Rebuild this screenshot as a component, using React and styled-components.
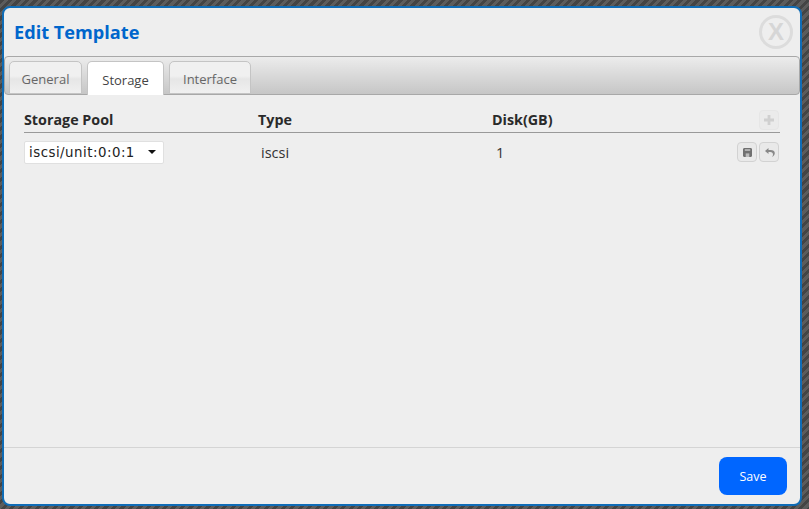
import React from "react";
import styled, { createGlobalStyle } from "styled-components";

const Global = createGlobalStyle`
  html, body { margin: 0; padding: 0; height: 100%; }
  body { font-family: "Open Sans", sans-serif; overflow: hidden; }
  #root { height: 100%; }
`;

const Page = styled.div`
  box-sizing: border-box;
  width: 809px;
  height: 509px;
  padding: 6px 7px 3px 2px;
  background: repeating-linear-gradient(135deg, #444444 0 3px, #5c5c5c 3px 6px);
`;

const Modal = styled.section`
  box-sizing: border-box;
  height: 500px;
  display: flex;
  flex-direction: column;
  background: #eeeeee;
  border: 2px solid #0f6cb6;
  border-radius: 8px;
`;

const Header = styled.header`
  height: 48px;
  flex: none;
  display: flex;
  align-items: center;
  justify-content: space-between;
  padding: 0 7px 0 10px;
`;

const Title = styled.h1`
  margin: 0;
  font-size: 18.15px;
  font-weight: 700;
  color: #0066cc;
`;

const Close = styled.div`
  box-sizing: border-box;
  width: 34px;
  height: 34px;
  border: 3px solid #dcdcdc;
  border-radius: 50%;
  display: flex;
  align-items: center;
  justify-content: center;
  font: 700 24px "Liberation Sans", sans-serif;
  color: #d6d6d6;
`;

const TabBar = styled.nav`
  box-sizing: border-box;
  height: 39px;
  flex: none;
  padding: 4px 4px 0;
  display: flex;
  align-items: flex-start;
  gap: 5px;
  border: 1px solid #a8a8a8;
  border-radius: 4px;
  background: linear-gradient(#ececec, #c6c6c6);
`;

const Tab = styled.div`
  box-sizing: border-box;
  height: ${(p) => (p.$active ? "34px" : "33px")};
  width: ${(p) => p.$w}px;
  display: flex;
  align-items: center;
  justify-content: center;
  padding-top: 2px;
  font-size: 13px;
  color: ${(p) => (p.$active ? "#444" : "#666")};
  border: 1px solid #c4c4c4;
  border-bottom: ${(p) => (p.$active ? "none" : "1px solid #c4c4c4")};
  border-radius: 5px 5px 0 0;
  background: ${(p) => (p.$active ? "#fff" : "linear-gradient(#f0f0f0 0 45%, #e6e6e6 55%, #f0f0f0)")};
`;

const Body = styled.div`
  flex: 1;
  padding: 15px 20px 0;
`;

const Row = styled.div`
  display: grid;
  grid-template-columns: 234px 234px 1fr auto;
  align-items: center;
`;

const HeadRow = styled(Row)`
  height: 22px;
  border-bottom: 1px solid #999;
  align-items: start;
`;

const HeadCell = styled.div`
  font-size: 14.3px;
  font-weight: 700;
  line-height: 20px;
  color: #2a2a2a;
`;

const DataRow = styled(Row)`
  margin-top: 7px;
  height: 24px;
`;

const Cell = styled.div`
  font-size: 14.5px;
  color: #333;
  padding-left: ${(p) => p.$pad}px;
`;

const FakeSelect = styled.div`
  box-sizing: border-box;
  width: 140px;
  height: 23px;
  padding: 0 7px 0 4px;
  display: flex;
  align-items: center;
  justify-content: space-between;
  background: #fff;
  border: 1px solid #e0e0e0;
  border-radius: 2px;
  font: 13.33px "DejaVu Sans", sans-serif;
  letter-spacing: 0.5px;
  color: #222;
`;

const Caret = styled.span`
  width: 0;
  height: 0;
  border-left: 4px solid transparent;
  border-right: 4px solid transparent;
  border-top: 4px solid #111;
`;

const Actions = styled.div`
  display: flex;
  gap: 2px;
  padding-right: 1px;
`;

const IconBtn = styled.div`
  box-sizing: border-box;
  width: 20px;
  height: 20px;
  display: flex;
  align-items: center;
  justify-content: center;
  border: 1px solid ${(p) => (p.$faint ? "#e6e6e6" : "#d2d2d2")};
  border-radius: 4px;
  background: ${(p) => (p.$faint ? "#ebebeb" : "#e9e9e9")};
`;

const Footer = styled.footer`
  height: 57px;
  flex: none;
  box-sizing: border-box;
  border-top: 1px solid #d4d4d4;
  display: flex;
  justify-content: flex-end;
  align-items: flex-start;
  padding: 9px 13px 0 0;
`;

const SaveButton = styled.button`
  width: 68px;
  height: 38px;
  border: none;
  border-radius: 8px;
  background: #0066ff;
  color: #fff;
  font: 12.5px "Open Sans", sans-serif;
`;

const Plus = () => (
  <svg width="10" height="10" viewBox="0 0 10 10"><path d="M3.6 0h2.8v3.6H10v2.8H6.4V10H3.6V6.4H0V3.6h3.6z" fill="#d0d0d0" /></svg>
);
const Disk = () => (
  <svg width="9" height="9" viewBox="0 0 10 10">
    <path d="M1 0h8l1 1v8l-1 1H1L0 9V1z" fill="#707070" />
    <rect x="2" y="1.5" width="6" height="1.5" fill="#ccc" />
    <rect x="3" y="6" width="4" height="4" fill="#bbb" />
  </svg>
);
const Undo = () => (
  <svg width="11" height="11" viewBox="0 0 11 11">
    <path d="M4.5 1 1 4l3.5 3V5h1.800C8 5 9 6 9 7.500c0 .9-.3 1.700-1 2.500 1.800-.9 2.800-2.300 2.800-4C10.800 4 9 3 6.500 3h-2z" fill="#888" />
  </svg>
);

export default function App() {
  return (
    <Page>
      <Global />
      <Modal>
        <Header>
          <Title>Edit Template</Title>
          <Close>X</Close>
        </Header>
        <TabBar>
          <Tab $w={73}>General</Tab>
          <Tab $w={77} $active>Storage</Tab>
          <Tab $w={82}>Interface</Tab>
        </TabBar>
        <Body>
          <HeadRow>
            <HeadCell>Storage Pool</HeadCell>
            <HeadCell>Type</HeadCell>
            <HeadCell>Disk(GB)</HeadCell>
            <Actions>
              <IconBtn $faint><Plus /></IconBtn>
            </Actions>
          </HeadRow>
          <DataRow>
            <div><FakeSelect>iscsi/unit:0:0:1<Caret /></FakeSelect></div>
            <Cell $pad={3}>iscsi</Cell>
            <Cell $pad={4}>1</Cell>
            <Actions>
              <IconBtn><Disk /></IconBtn>
              <IconBtn><Undo /></IconBtn>
            </Actions>
          </DataRow>
        </Body>
        <Footer>
          <SaveButton>Save</SaveButton>
        </Footer>
      </Modal>
    </Page>
  );
}
